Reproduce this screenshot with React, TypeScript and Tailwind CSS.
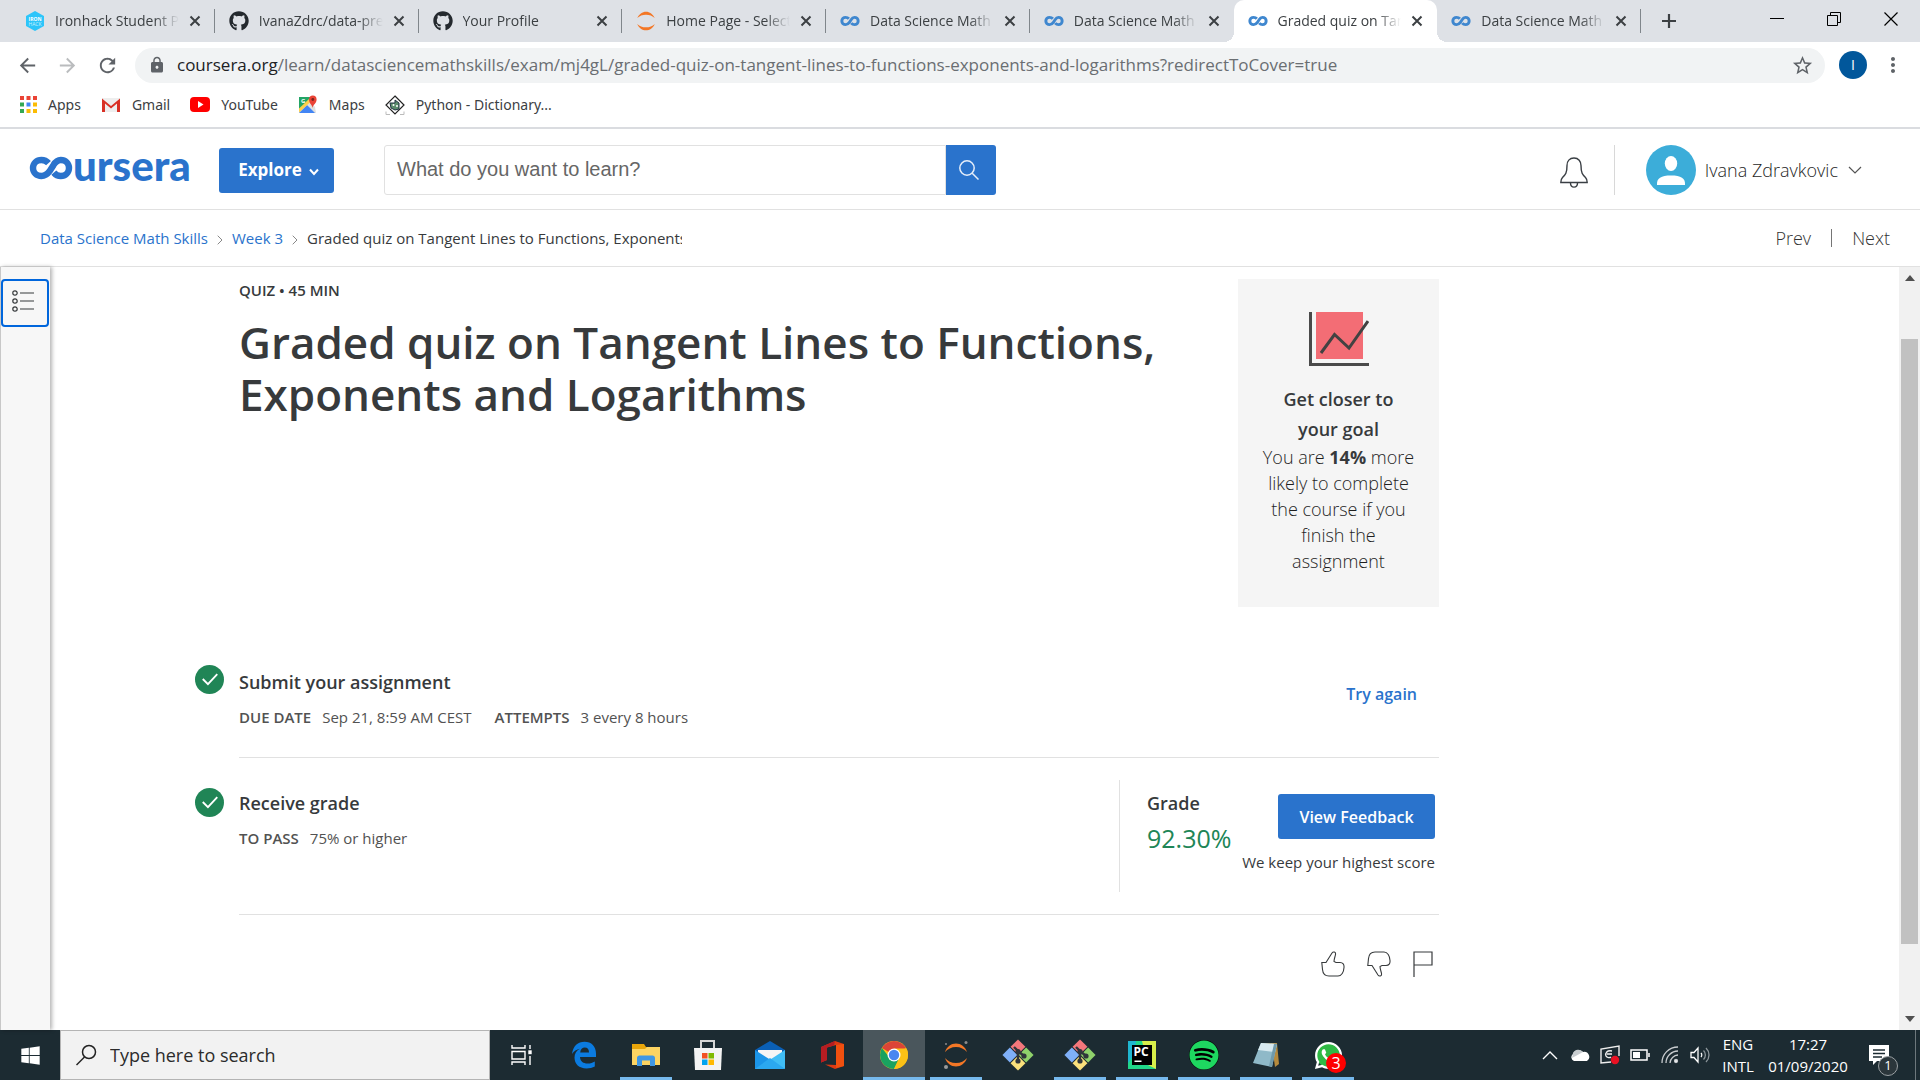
import React from "react";
import { FaGithub, FaSpotify, FaWhatsapp, FaWindows } from "react-icons/fa";
import { MdLock, MdStarBorder, MdMoreVert, MdArrowBack, MdArrowForward, MdRefresh } from "react-icons/md";

type TabIcon = "ironhack" | "github" | "jupyter" | "coursera";

const tabs: { icon: TabIcon; title: string; active?: boolean; rule?: boolean }[] = [
  { icon: "ironhack", title: "Ironhack Student Portal", rule: true },
  { icon: "github", title: "IvanaZdrc/data-prework", rule: true },
  { icon: "github", title: "Your Profile", rule: true },
  { icon: "jupyter", title: "Home Page - Select or create", rule: true },
  { icon: "coursera", title: "Data Science Math Skills", rule: true },
  { icon: "coursera", title: "Data Science Math Skills" },
  { icon: "coursera", title: "Graded quiz on Tangent Lines", active: true },
  { icon: "coursera", title: "Data Science Math Skills", rule: true },
];

function CourseraMark({ className }: { className: string }) {
  return (
    <svg viewBox="0 0 44 24" className={className} fill="none" stroke="currentColor" strokeWidth="6.4">
      <path d="M19.5 7.2C17.6 5 15.2 4 12.4 4C7.6 4 4 7.4 4 12C4 16.6 7.6 20 12.4 20C16.2 20 18.6 18 20.6 15.2L24.4 9.2C26.2 6.2 28.4 4 31.8 4C36.4 4 40 7.4 40 12C40 16.6 36.4 20 31.8 20C29 20 26.6 18.8 24.8 16.6" />
    </svg>
  );
}

function JupyterMark({ className }: { className: string }) {
  return (
    <svg viewBox="0 0 24 24" className={className} fill="#f37726">
      <path d="M1.500 8.500C3.500 3.800 7.600.800 12 .8S20.500 3.800 22.500 8.500C19.800 5.800 16.200 4.400 12 4.400S4.200 5.800 1.500 8.500Z" />
      <path d="M1.500 15.500C3.500 20.200 7.600 23.200 12 23.200S20.500 20.200 22.500 15.500C19.800 18.200 16.200 19.600 12 19.600S4.200 18.200 1.500 15.500Z" />
    </svg>
  );
}

function TabGlyph({ icon }: { icon: TabIcon }) {
  if (icon === "github") return <FaGithub className="size-5 shrink-0 text-[#24292e]" />;
  if (icon === "jupyter") return <JupyterMark className="size-5 shrink-0" />;
  if (icon === "coursera") return <CourseraMark className="h-3 w-5 shrink-0 text-[#3f87cf]" />;
  return (
    <svg viewBox="0 0 20 20" className="size-5 shrink-0">
      <path d="M10 0L19 5V15L10 20L1 15V5Z" fill="#2dc5fa" />
      <text x="10" y="9.500" textAnchor="middle" fontSize="5" fontWeight="700" fill="#fff">IRON</text>
      <text x="10" y="14.500" textAnchor="middle" fontSize="5" fill="#c9f0fd">HACK</text>
    </svg>
  );
}

function Cross({ className }: { className: string }) {
  return (
    <svg viewBox="0 0 12 12" className={className} fill="none" stroke="currentColor" strokeWidth="2">
      <path d="M1.500 1.500L10.500 10.500M10.500 1.500L1.500 10.500" />
    </svg>
  );
}

function BrowserTabs() {
  return (
    <div className="flex h-[42px] bg-[#dee1e6] pl-[11px]">
      <div className="grid flex-1 grid-cols-8">
        {tabs.map((tab, i) => (
          <div
            key={i}
            className={
              tab.active
                ? "relative flex min-w-0 items-center rounded-t-[10px] bg-white pr-3.5 pl-3.5"
                : "relative flex min-w-0 items-center pr-3.5 pl-3.5"
            }
          >
            {tab.active && (
              <>
                <span className="absolute bottom-0 -left-2.5 size-2.5 bg-[radial-gradient(circle_at_0_0,transparent_10px,white_10px)]" />
                <span className="absolute -right-2.5 bottom-0 size-2.5 bg-[radial-gradient(circle_at_100%_0,transparent_10px,white_10px)]" />
              </>
            )}
            <TabGlyph icon={tab.icon} />
            <button className="ml-2.5 flex-1 overflow-hidden text-left text-sm whitespace-nowrap text-[#3c4043] [mask-image:linear-gradient(to_right,black_80%,transparent)]">
              {tab.title}
            </button>
            <button aria-label="Close tab" className="ml-2.5 text-[#3c4043]">
              <Cross className="size-3" />
            </button>
            {tab.rule && <span className="absolute top-[9px] right-0 h-6 w-px bg-[#80868b]" />}
          </div>
        ))}
      </div>
      <div className="flex w-[279px] items-center justify-between pr-[22px] pl-5">
        <button aria-label="New tab" className="text-[#3c4043]">
          <svg viewBox="0 0 16 16" className="size-4" stroke="currentColor" strokeWidth="2.200">
            <path d="M8 1V15M1 8H15" />
          </svg>
        </button>
        <div className="flex items-center gap-[43px] pb-1 text-black">
          <button aria-label="Minimize">
            <svg viewBox="0 0 14 14" className="size-3.5" stroke="currentColor"><path d="M0 6.500H14" /></svg>
          </button>
          <button aria-label="Restore">
            <svg viewBox="0 0 14 14" className="size-3.5" fill="none" stroke="currentColor">
              <path d="M.5 3.500H10.500V13.500H.5ZM3.500 3.500V.5H13.500V10.500H10.500" />
            </svg>
          </button>
          <button aria-label="Close">
            <svg viewBox="0 0 14 14" className="size-3.5" stroke="currentColor" strokeWidth="1.200"><path d="M.5.5L13.500 13.500M13.500.5L.5 13.500" /></svg>
          </button>
        </div>
      </div>
    </div>
  );
}

function AddressBar() {
  return (
    <div className="flex h-[46px] items-center pr-[15px] pl-4">
      <button aria-label="Back" className="text-[#5f6368]"><MdArrowBack className="size-[23px]" /></button>
      <button aria-label="Forward" className="ml-[17px] text-[#babcbe]"><MdArrowForward className="size-[23px]" /></button>
      <button aria-label="Reload" className="ml-[17px] text-[#5f6368]"><MdRefresh className="size-[23px]" /></button>
      <div className="ml-4 flex h-[35px] flex-1 items-center rounded-full bg-[#f1f3f4] pr-[11px] pl-[13px]">
        <MdLock className="size-[18px] text-[#5f6368]" />
        <span className="ml-[11px] flex-1 text-[17px] text-[#6a6e72]">
          <span className="text-[#202124]">coursera.org</span>
          /learn/datasciencemathskills/exam/mj4gL/graded-quiz-on-tangent-lines-to-functions-exponents-and-logarithms?redirectToCover=true
        </span>
        <button aria-label="Bookmark" className="text-[#5f6368]"><MdStarBorder className="size-[23px]" /></button>
      </div>
      <button className="ml-3.5 size-7 rounded-full bg-[#01579b] text-sm text-white">I</button>
      <button aria-label="Menu" className="ml-[14px] text-[#5f6368]"><MdMoreVert className="size-6" /></button>
    </div>
  );
}

const appDots = ["#ea4335", "#ea4335", "#ea4335", "#34a853", "#4285f4", "#fbbc04", "#34a853", "#fbbc04", "#fbbc04"];

function BookmarksBar() {
  return (
    <nav className="flex h-[41px] items-center border-b-2 border-[#dadce0] pb-1.5 pl-5 font-['Noto_Sans',sans-serif] text-sm text-[#3c4043]">
      <a href="#apps" className="flex items-center gap-[11px]">
        <svg viewBox="0 0 17 17" className="size-[17px]">
          {appDots.map((c, i) => (
            <rect key={i} x={(i % 3) * 6.500} y={Math.floor(i / 3) * 6.500} width="4" height="4" fill={c} />
          ))}
        </svg>
        Apps
      </a>
      <a href="#gmail" className="ml-5 flex items-center gap-[11px]">
        <svg viewBox="0 0 20 16" className="h-4 w-5">
          <path d="M1 1H19V15H1Z" fill="#eee" />
          <path d="M1 15V1.500L10 9L19 1.500V15H16V6.500L10 11.500L4 6.500V15Z" fill="#d93025" />
        </svg>
        Gmail
      </a>
      <a href="#youtube" className="ml-5 flex items-center gap-[11px]">
        <svg viewBox="0 0 20 15" className="h-[15px] w-5">
          <rect width="20" height="15" rx="4" fill="#f00" />
          <path d="M8 4L13.500 7.500L8 11Z" fill="#fff" />
        </svg>
        YouTube
      </a>
      <a href="#maps" className="ml-5 flex items-center gap-[11px]">
        <svg viewBox="0 0 20 20" className="size-5">
          <path d="M1 2H14L1 15Z" fill="#23a566" />
          <path d="M1 15L12 6L17 12L18 18H1Z" fill="#e0e0de" />
          <path d="M1 18L9 10L17 18Z" fill="#4285f4" />
          <path d="M1 13.500L11 4L13 6.500L1 17.500Z" fill="#fdd04b" />
          <text x="3" y="8" fontSize="6" fontWeight="700" fill="#fff">G</text>
          <path d="M14.500 13C14.200 9.500 11 8.500 11 4.500C11 2 12.500.5 14.800.5S18.600 2 18.600 4.500C18.600 8.500 15 9.500 14.500 13Z" fill="#ea4335" />
          <circle cx="14.800" cy="4.500" r="1.400" fill="#7b231d" />
        </svg>
        Maps
      </a>
      <a href="#python" className="ml-5 flex items-center gap-[11px]">
        <svg viewBox="0 0 20 20" className="size-5" fill="none">
          <path d="M10 1L19 10L10 19L1 10Z" stroke="#222" strokeWidth="1.200" />
          <path d="M5 8H10V5L14 8V14L10 15L6 13Z" fill="#5b8c6d" stroke="#234" strokeWidth="1" />
          <circle cx="8.500" cy="10" r="1" fill="#fff" />
          <circle cx="12" cy="11" r="1" fill="#fff" />
          <path d="M1 16.500V19.500H5M19 16.500V19.500H15" stroke="#bbb" />
        </svg>
        Python - Dictionary...
      </a>
    </nav>
  );
}

function SiteHeader() {
  return (
    <header className="flex h-[81px] items-center border-b border-[#e1e1e1] pt-0.5 pr-[58px] pl-[29px]">
      <a href="#home" aria-label="coursera" className="flex w-[162px] items-center text-[#2a73cc]">
        <CourseraMark className="-mt-1 h-6 w-11 shrink-0" />
        <span className="-mt-2.5 font-[Lato] text-[42px] leading-10 font-black">ursera</span>
      </a>
      <button className="ml-7 flex h-[45px] w-[115px] items-center justify-center gap-[7px] rounded-[3px] bg-[#2a73cc] pl-1 text-[17px] font-bold text-white">
        Explore
        <svg viewBox="0 0 10 8" className="mt-1 h-2 w-2.5" fill="none" stroke="currentColor" strokeWidth="2"><path d="M1 1.500L5 6L9 1.500" /></svg>
      </button>
      <form className="ml-[50px] flex h-[50px] w-[612px]">
        <input
          aria-label="Search courses"
          placeholder="What do you want to learn?"
          className="min-w-0 flex-1 rounded-l-[3px] border border-[#e1e1e1] px-3 pb-0.5 font-['Liberation_Sans',sans-serif] text-xl text-[#525252] placeholder:text-[#666]"
        />
        <button type="button" aria-label="Search" className="flex w-[50px] items-center justify-center rounded-r-[3px] bg-[#2a73cc] pr-1">
          <svg viewBox="0 0 20 20" className="size-5" fill="none" stroke="#e6eefa" strokeWidth="1.500"><circle cx="8" cy="8" r="7.200" /><path d="M13.200 13.200L19.500 19.500" /></svg>
        </button>
      </form>
      <button aria-label="Notifications" className="mt-1 ml-auto">
        <svg viewBox="0 0 28 31" className="h-[31px] w-7" fill="none" stroke="#3a3f44" strokeWidth="1.400">
          <path d="M14 1C9.500 1 7 4.300 7 8.500C7 16 5.500 17.500 2.500 20.500C1 22 .8 23.500.8 25.500H27.200C27.200 23.500 27 22 25.500 20.500C22.500 17.500 21 16 21 8.500C21 4.300 18.500 1 14 1Z" />
          <path d="M10.500 26C10.500 31.500 17.500 31.500 17.500 26" />
        </svg>
      </button>
      <span className="ml-[26px] h-[50px] w-px bg-[#d8d8d8]" />
      <button className="ml-[31px] flex items-center text-lg font-light text-[#1f1f1f]">
        <svg viewBox="0 0 50 50" className="size-[50px]">
          <circle cx="25" cy="25" r="25" fill="#3cadd9" />
          <ellipse cx="25" cy="18.500" rx="6.200" ry="7.500" fill="#fff" />
          <path d="M11 40C10.500 33 15 30.500 25 30.500S39.500 33 39 40Z" fill="#fff" />
        </svg>
        <span className="ml-[9px]">Ivana Zdravkovic</span>
        <svg viewBox="0 0 14 8" className="ml-2.5 h-2 w-3.5" fill="none" stroke="#555" strokeWidth="1.200"><path d="M1 1L7 7L13 1" /></svg>
      </button>
    </header>
  );
}

function CrumbArrow() {
  return <svg viewBox="0 0 6 10" className="mt-1 h-2.5 w-1.5" fill="none" stroke="#888"><path d="M.7.7L5 5L.7 9.300" /></svg>;
}

function Breadcrumbs() {
  return (
    <div className="flex h-[57px] items-center justify-between border-b border-[#e1e1e1] pr-[30px] pl-10">
      <nav className="flex items-center gap-[9px] text-[15px] text-[#373a3c]">
        <a href="#course" className="text-[#2a73cc]">Data Science Math Skills</a>
        <CrumbArrow />
        <a href="#week3" className="text-[#2a73cc]">Week 3</a>
        <CrumbArrow />
        <span className="w-[375px] overflow-hidden whitespace-nowrap">Graded quiz on Tangent Lines to Functions, Exponents and Logarithms</span>
      </nav>
      <nav className="flex items-center gap-5 text-lg font-light text-[#333]">
        <a href="#prev">Prev</a>
        <span className="h-[18px] w-px bg-[#757575]" />
        <a href="#next">Next</a>
      </nav>
    </div>
  );
}

function DoneMark() {
  return (
    <svg viewBox="0 0 28 28" className="mt-2 size-[29px] shrink-0">
      <circle cx="14" cy="14" r="14" fill="#208556" />
      <path d="M7.500 13.500L12.500 18.500L21.500 8.800" fill="none" stroke="#fff" strokeWidth="1.800" />
    </svg>
  );
}

function Fact({ label, value }: { label: string; value: string }) {
  return (
    <div className="flex gap-[11px]">
      <dt className="font-semibold">{label}</dt>
      <dd>{value}</dd>
    </div>
  );
}

function QuizPage() {
  return (
    <main className="mr-auto ml-[145px] flex w-[1244px] flex-col pt-3 text-[#373a3c]">
      <section className="ml-11 flex items-start justify-between">
        <div className="w-[960px]">
          <p className="text-[15px] leading-[22px] font-semibold">QUIZ • 45 MIN</p>
          <h1 className="mt-[15px] text-[44px] leading-[52px] font-semibold">Graded quiz on Tangent Lines to Functions, Exponents and Logarithms</h1>
        </div>
        <aside className="flex w-[201px] flex-col items-center bg-[#f5f5f5] px-5 pt-[33px] pb-[33px] text-center">
          <svg viewBox="0 0 60 54" className="h-[54px] w-[60px]" fill="none">
            <rect x="7" y="0" width="47" height="47" fill="#f36d75" />
            <path d="M1.500 0V52.500H60" stroke="#4a4a4a" strokeWidth="3" />
            <path d="M12 41L25.500 22.500L40 36L59 9" stroke="#424242" strokeWidth="3" />
          </svg>
          <h2 className="mt-[18px] text-lg leading-[30px] font-semibold">Get closer to<br />your goal</h2>
          <p className="text-lg leading-[26px] font-light text-[#1f1f1f]">You are <span className="font-bold text-[#373a3c]">14%</span> more likely to complete the course if you finish the assignment</p>
        </aside>
      </section>

      <section className="mt-[50px] flex">
        <DoneMark />
        <div className="ml-[15px] flex flex-1 items-start justify-between border-b border-[#e1e1e1] pt-3 pb-7">
          <div>
            <h2 className="text-lg leading-[26px] font-semibold">Submit your assignment</h2>
            <dl className="mt-2.5 flex gap-[23px] text-[15px] leading-6 text-[#525252]">
              <Fact label="DUE DATE" value="Sep 21, 8:59 AM CEST" />
              <Fact label="ATTEMPTS" value="3 every 8 hours" />
            </dl>
          </div>
          <button className="mt-[13px] mr-[22px] text-base leading-6 font-semibold text-[#2a73cc]">Try again</button>
        </div>
      </section>

      <section className="flex pt-[22px]">
        <DoneMark />
        <div className="ml-[15px] flex flex-1 items-start justify-between border-b border-[#e1e1e1] pb-[22px]">
          <div className="pt-2.5">
            <h2 className="text-lg leading-[26px] font-semibold">Receive grade</h2>
            <dl className="mt-2.5 text-[15px] leading-6 text-[#525252]">
              <Fact label="TO PASS" value="75% or higher" />
            </dl>
          </div>
          <div className="flex h-[112px] w-[320px] justify-between border-l border-[#e1e1e1] pr-1 pl-[27px]">
            <div className="pt-2.5">
              <h2 className="text-lg leading-[26px] font-semibold">Grade</h2>
              <p className="mt-1.5 w-0 text-[25px] leading-8 text-[#208556]">92.30%</p>
            </div>
            <div className="flex flex-col items-end pt-3.5">
              <button className="h-[45px] w-[157px] rounded-[3px] bg-[#2a73cc] text-base font-semibold text-white">View Feedback</button>
              <p className="mt-[11px] text-[15px] leading-6">We keep your highest score</p>
            </div>
          </div>
        </div>
      </section>

      <div className="mt-9 flex justify-end gap-[22px] pr-1.5">
        <button aria-label="Like">
          <svg viewBox="0 0 24 26" className="h-[26px] w-6" fill="none" stroke="#373a3c" strokeWidth="1.100">
            <path d="M.8 11.500H5L11 2C12.200.3 15 .8 14.500 3.500C14.200 5.500 13 8 13 10.500L15 11.500H19C22 11.500 23.300 13.500 23 16.500C22.800 21 20.500 25 17 25H8C4 25 1.800 22 1.500 18.500Z" />
          </svg>
        </button>
        <button aria-label="Dislike">
          <svg viewBox="0 0 24 26" className="h-[26px] w-6" fill="none" stroke="#373a3c" strokeWidth="1.100">
            <path d="M.8 14.500H5L11 24C12.200 25.700 15 25.200 14.500 22.500C14.200 20.500 13 18 13 15.500L15 14.500H19C22 14.500 23.300 12.500 23 9.500C22.800 5 20.500 1 17 1H8C4 1 1.800 4 1.500 7.500Z" />
          </svg>
        </button>
        <button aria-label="Report">
          <svg viewBox="0 0 20 26" className="h-[26px] w-5" fill="none" stroke="#373a3c" strokeWidth="1.200">
            <path d="M1 26V1H19V14H1" />
          </svg>
        </button>
      </div>
    </main>
  );
}

function Workspace() {
  return (
    <div className="flex flex-1">
      <div className="z-10 w-[50px] border-l border-[#c8c8c8] bg-[#f7f7f7] pt-3 shadow-[2px_0_4px_rgba(0,0,0,0.3)]">
        <button aria-label="Open navigation" className="h-12 w-12 rounded-[4px] border-2 border-[#0066dc] pl-[9px]">
          <svg viewBox="0 0 22 22" className="-mt-1 size-[22px]" fill="none" stroke="#373a3c" strokeWidth="1.200">
            <circle cx="3" cy="3" r="2.200" /><circle cx="3" cy="11" r="2.200" /><circle cx="3" cy="19" r="2.200" />
            <path d="M8 3H22M8 11H22M8 19H22" />
          </svg>
        </button>
      </div>
      <div className="flex-1"><QuizPage /></div>
      <div className="flex w-[21px] flex-col items-center bg-[#f1f1f1] py-2">
        <svg viewBox="0 0 10 6" className="h-1.5 w-2.5" fill="#505050"><path d="M5 0L10 6H0Z" /></svg>
        <div className="mt-[58px] w-[17px] grow-[605] bg-[#c1c1c1]" />
        <div className="grow-[72]" />
        <svg viewBox="0 0 10 6" className="h-1.5 w-2.5" fill="#505050"><path d="M5 6L10 0H0Z" /></svg>
      </div>
    </div>
  );
}

function GitIcon() {
  return (
    <svg viewBox="0 0 32 32" className="size-8">
      <g transform="rotate(45 16 16)">
        <rect x="5" y="5" width="10.500" height="10.500" fill="#f4777b" />
        <rect x="16.500" y="5" width="10.500" height="10.500" fill="#8fd16b" />
        <rect x="5" y="16.500" width="10.500" height="10.500" fill="#7fb0f8" />
        <rect x="16.500" y="16.500" width="10.500" height="10.500" fill="#fbe17c" />
      </g>
      <path d="M12 8L16 12V22M16 12L22 17" fill="none" stroke="#30363b" strokeWidth="2.400" />
      <circle cx="16" cy="12.500" r="2.600" fill="#30363b" /><circle cx="16" cy="22" r="2.600" fill="#30363b" /><circle cx="22" cy="17" r="2.600" fill="#30363b" />
    </svg>
  );
}

const taskbarApps: { name: string; running?: boolean; focused?: boolean; icon: React.ReactNode }[] = [
  {
    name: "Task view",
    icon: (
      <svg viewBox="0 0 22 20" className="h-5 w-[22px]" fill="none" stroke="#fff" strokeWidth="1.400">
        <path d="M1 0V3H14V0M1 6.500H14V14H1ZM1 20V17H14V20M19 0V4M19 11V20" /><rect x="18" y="6" width="2" height="2.500" fill="#fff" />
      </svg>
    ),
  },
  {
    name: "Edge",
    icon: (
      <svg viewBox="0 0 26 28" className="h-7 w-[26px]">
        <path d="M1 13C2 5 7 .8 13.500.8C20.500.8 25 5.500 25 12.500V16H9C9.200 20.500 12.500 22.500 16.500 22.500C19.500 22.500 21.800 21.600 23.800 20.400V25.500C21.500 26.800 18.500 27.400 15.500 27.400C8 27.400 3.500 23 3.500 16.500C3.500 12.500 5.500 9.500 9 7.700C5.500 8.400 3 10 1 13ZM9.200 11.500H18C18 8.300 16.500 6.600 13.800 6.600C11.300 6.600 9.500 8.500 9.200 11.500Z" fill="#0b7be0" />
      </svg>
    ),
  },
  {
    name: "File Explorer",
    running: true,
    icon: (
      <svg viewBox="0 0 28 24" className="h-6 w-7">
        <path d="M0 1H12L14 4H28V10H0Z" fill="#e8a50a" /><path d="M0 6H13L15 4H28V22H0Z" fill="#fcd462" />
        <path d="M5 23V15C5 13.500 6 12.500 7.500 12.500H20.500C22 12.500 23 13.500 23 15V23H18V17.500H10V23Z" fill="#3f97e4" />
      </svg>
    ),
  },
  {
    name: "Store",
    icon: (
      <svg viewBox="0 0 30 30" className="size-[30px]">
        <path d="M8 9V1H21V9" fill="none" stroke="#d6d6d6" strokeWidth="2" /><path d="M1 8H29L28 30H2Z" fill="#f3f3f3" />
        <rect x="9" y="13" width="5.500" height="5.500" fill="#f25022" /><rect x="15.500" y="13" width="5.500" height="5.500" fill="#7fba00" />
        <rect x="9" y="19.500" width="5.500" height="5.500" fill="#00a4ef" /><rect x="15.500" y="19.500" width="5.500" height="5.500" fill="#ffb900" />
      </svg>
    ),
  },
  {
    name: "Mail",
    icon: (
      <svg viewBox="0 0 30 28" className="h-7 w-[30px]">
        <path d="M0 9L15 0L30 9V18H0Z" fill="#0a5fb5" /><path d="M3 9H27V18H3Z" fill="#f5f5f5" />
        <path d="M0 9L30 28H0Z" fill="#1b95e8" /><path d="M30 9L13 20L30 28Z" fill="#40bdf5" /><path d="M0 28L15 17L30 28Z" fill="#2ba8f0" />
      </svg>
    ),
  },
  {
    name: "Office",
    icon: (
      <svg viewBox="0 0 24 28" className="h-7 w-6">
        <path d="M15 0L24 3V25L15 28L5 23.500L16 24V4L7 6.500V19L1 21.500V6Z" fill="#dc3a12" /><path d="M1 6L15 0L14 4.500L7 6.500V19L1 21.500Z" fill="#b51d22" /><path d="M16 4L24 3V25L16 27Z" fill="#f0500f" />
      </svg>
    ),
  },
  {
    name: "Chrome",
    running: true,
    focused: true,
    icon: (
      <svg viewBox="0 0 28 28" className="size-7">
        <circle cx="14" cy="14" r="14" fill="#fbc116" />
        <path d="M14 14L1.900 7A14 14 0 0 1 26.100 7Z" fill="#dc4437" />
        <path d="M14 14H7.500L1.900 7A14 14 0 0 0 14 28L19 17Z" fill="#1aa260" />
        <path d="M14 7.500H26.400A14 14 0 0 1 14 28L20 17Z" fill="#fbc116" />
        <circle cx="14" cy="14" r="6.500" fill="#fff" /><circle cx="14" cy="14" r="5.200" fill="#4a86f0" />
      </svg>
    ),
  },
  {
    name: "Jupyter",
    running: true,
    icon: (
      <svg viewBox="0 0 28 30" className="h-[30px] w-7" fill="#f37726">
        <path d="M3 12C5 6.500 9 3.500 14 3.500S23 6.500 25 12C22.500 9 18.500 7 14 7S5.500 9 3 12Z" />
        <path d="M3 18C5 23.500 9 26.500 14 26.500S23 23.500 25 18C22.500 21 18.500 23 14 23S5.500 21 3 18Z" />
        <circle cx="24" cy="2.500" r="1.500" fill="#8b8b8b" /><circle cx="4" cy="27" r="2" fill="#9a9a9a" /><circle cx="4" cy="4" r="1" fill="#8b8b8b" />
      </svg>
    ),
  },
  { name: "Git Bash", icon: <GitIcon /> },
  { name: "Git GUI", running: true, icon: <GitIcon /> },
  {
    name: "PyCharm",
    running: true,
    icon: (
      <svg viewBox="0 0 28 28" className="size-7">
        <rect width="28" height="28" fill="#21d789" /><path d="M14 0H28V28L20 24Z" fill="#d8ee4a" /><path d="M0 0H8L6 14L0 22Z" fill="#1fb6d0" />
        <rect x="4" y="4" width="20" height="20" fill="#000" />
        <text x="5.500" y="15" fontSize="12" fontWeight="700" fill="#fff">PC</text><rect x="6.500" y="19.500" width="7" height="1.500" fill="#fff" />
      </svg>
    ),
  },
  { name: "Spotify", running: true, icon: <span className="rounded-full bg-black"><FaSpotify className="size-[30px] text-[#1ed760]" /></span> },
  {
    name: "Notepad",
    running: true,
    icon: (
      <svg viewBox="0 0 28 28" className="size-7">
        <path d="M9 2H25L27 23L23 26L20 5Z" fill="#b58a3d" /><path d="M9 2L25 3L20 26L1 22Z" fill="#8fb9c8" /><path d="M9 2L25 3L23 11L6 9Z" fill="#d7e9ef" /><path d="M25 3L20 26L17 25L22 3Z" fill="#6f9aab" />
      </svg>
    ),
  },
  {
    name: "WhatsApp",
    running: true,
    icon: (
      <span className="relative flex size-7 items-center justify-center">
        <span className="absolute inset-0.5 rounded-full bg-[#2fb944]" />
        <FaWhatsapp className="relative size-[31px] shrink-0 text-white" />
        <span className="absolute -right-1 -bottom-1 flex size-5 items-center justify-center rounded-full bg-[#f00] text-base text-white">3</span>
      </span>
    ),
  },
];

function Taskbar() {
  return (
    <footer className="flex h-[50px] bg-[#1c2b32] text-white">
      <button aria-label="Start" className="flex w-[60px] items-center justify-center"><FaWindows className="size-[21px]" /></button>
      <label className="flex w-[430px] items-center border border-[#b4b4b4] bg-[#f2f2f2] pl-3.5">
        <svg viewBox="0 0 22 22" className="size-[22px]" fill="none" stroke="#222" strokeWidth="1.500"><circle cx="14" cy="8" r="6.500" /><path d="M9.500 13L1.500 21" /></svg>
        <input aria-label="Search Windows" placeholder="Type here to search" className="ml-[13px] min-w-0 flex-1 bg-transparent text-lg text-[#222] placeholder:text-[#2b2b2b]" />
      </label>
      <div className="flex pl-px">
        {taskbarApps.map((app) => (
          <button
            key={app.name}
            aria-label={app.name}
            className={app.focused ? "relative flex w-[62px] items-center justify-center bg-[#4a565c]" : "relative flex w-[62px] items-center justify-center"}
          >
            {app.icon}
            {app.running && (
              <span className={app.focused ? "absolute inset-x-0 bottom-0 h-[3px] bg-[#76b9ed]" : "absolute inset-x-[5px] bottom-0 h-[3px] bg-[#76b9ed]"} />
            )}
          </button>
        ))}
      </div>
      <div className="ml-auto flex items-center pr-1">
        <div className="flex items-center gap-2.5">
          <svg viewBox="0 0 20 20" className="size-5" fill="none" stroke="#fff" strokeWidth="1.400"><path d="M3 14L10 7L17 14" /></svg>
          <svg viewBox="0 0 20 20" className="size-5"><path d="M4 16A4 4 0 0 1 3 9A6 6 0 0 1 13 7A5 5 0 0 1 17 16Z" fill="#fff" /><path d="M2 13L13 7A6 6 0 0 0 3 8Z" fill="#c8cdd0" /></svg>
          <svg viewBox="0 0 20 20" className="size-5" fill="none" stroke="#eee" strokeWidth="1.400"><path d="M11 17L1 18V4L19 1V11" /><path d="M12 6C7 5 5 8 6 11C7 13 10 13 11 12M7 9H12" /><circle cx="15" cy="15" r="4.200" fill="#e81123" stroke="none" /></svg>
          <svg viewBox="0 0 20 20" className="size-5" fill="none" stroke="#fff" strokeWidth="1.500"><path d="M1 5H17V15H1ZM19 8V12" /><path d="M3 7H10V13H3Z" fill="#fff" stroke="none" /></svg>
          <svg viewBox="0 0 20 20" className="size-5" fill="none" stroke="#c9cdd0" strokeWidth="1.300"><path d="M2 18C2 9 9 2 18 2M6 18C6 11.500 11.500 6 18 6M10 18C10 14 14 10 18 10" /><circle cx="16" cy="16" r="1.500" fill="#fff" /></svg>
          <svg viewBox="0 0 20 20" className="size-5" fill="none" stroke="#fff" strokeWidth="1.300"><path d="M1 7.500H4L8 3V17L4 12.500H1ZM11 8C12 9 12 11 11 12" /><path d="M13.500 5.500C16 8 16 12 13.500 14.500M16 3C20 7 20 13 16 17" stroke="#8d969b" /></svg>
        </div>
        <div className="ml-2.5 flex w-9 flex-col items-center text-[15px] leading-[22px]"><span>ENG</span><span>INTL</span></div>
        <time className="ml-2 flex w-[88px] flex-col items-center text-[15px] leading-[22px]"><span>17:27</span><span>01/09/2020</span></time>
        <button aria-label="Notifications" className="relative ml-4">
          <svg viewBox="0 0 22 22" className="size-[22px]"><path d="M1 1H21V17H9L5 21V17H1Z" fill="#fff" /><path d="M5 6H17M5 9.500H17M5 13H14" stroke="#1c2b32" strokeWidth="1.400" /></svg>
          <span className="absolute -right-2 -bottom-2.5 flex size-5 items-center justify-center rounded-full border border-[#9aa0a3] bg-[#2b363b] text-[13px]">1</span>
        </button>
        <span className="ml-[25px] h-[50px] w-px bg-[#6d777c]" />
      </div>
    </footer>
  );
}

export default function App() {
  return (
    <div className="flex min-h-screen flex-col bg-white font-['Open_Sans','Noto_Sans',sans-serif]">
      <BrowserTabs />
      <AddressBar />
      <BookmarksBar />
      <SiteHeader />
      <Breadcrumbs />
      <Workspace />
      <Taskbar />
    </div>
  );
}
